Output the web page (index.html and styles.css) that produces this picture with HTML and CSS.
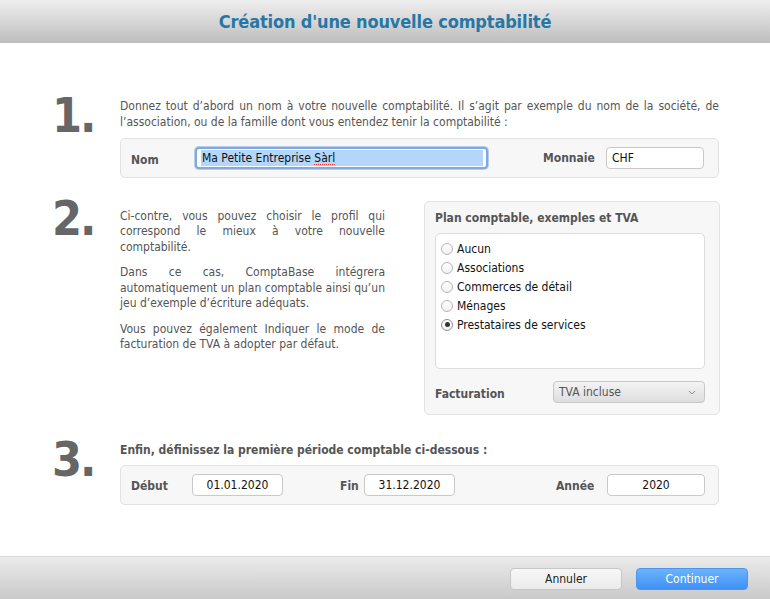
FILE: index.html
```html
<!DOCTYPE html>
<html lang="fr">
<head>
<meta charset="utf-8">
<title>Création d'une nouvelle comptabilité</title>
<link rel="stylesheet" href="styles.css">
</head>
<body>
<div class="window">
  <header class="titlebar">
    <h1 class="title">Création d'une nouvelle comptabilité</h1>
  </header>
  <main class="content">
    <section class="step step1">
      <div class="digit">1.</div>
      <div class="body">
        <p class="intro">Donnez tout d’abord un nom à votre nouvelle comptabilité. Il s’agit par exemple du nom de la société, de l’association, ou de la famille dont vous entendez tenir la comptabilité :</p>
        <div class="box row1">
          <span class="label lbl-nom">Nom</span>
          <div class="field field-nom focused"><span class="sel">Ma Petite Entreprise <span class="spell">Sàrl</span></span></div>
          <span class="label lbl-monnaie">Monnaie</span>
          <div class="field field-monnaie">CHF</div>
        </div>
      </div>
    </section>

    <section class="step step2">
      <div class="digit">2.</div>
      <div class="body split">
        <div class="explain">
          <p>Ci-contre, vous pouvez choisir le profil qui correspond le mieux à votre nouvelle comptabilité.</p>
          <p>Dans ce cas, ComptaBase intégrera automatiquement un plan comptable ainsi qu’un jeu d’exemple d’écriture adéquats.</p>
          <p>Vous pouvez également Indiquer le mode de facturation de TVA à adopter par défaut.</p>
        </div>
        <div class="panel">
          <div class="panel-title">Plan comptable, exemples et TVA</div>
          <ul class="radios">
            <li><span class="radio"></span>Aucun</li>
            <li><span class="radio"></span>Associations</li>
            <li><span class="radio"></span>Commerces de détail</li>
            <li><span class="radio"></span>Ménages</li>
            <li><span class="radio checked"></span>Prestataires de services</li>
          </ul>
          <div class="facturation">
            <span class="label">Facturation</span>
            <div class="select">TVA incluse
              <svg class="chev" width="8" height="5" viewBox="0 0 8 5"><path d="M1 1 L4 4 L7 1" fill="none" stroke="#8a8a8a" stroke-width="1"/></svg>
            </div>
          </div>
        </div>
      </div>
    </section>

    <section class="step step3">
      <div class="digit">3.</div>
      <div class="body">
        <p class="lead">Enfin, définissez la première période comptable ci-dessous :</p>
        <div class="box row3">
          <span class="label lbl-debut">Début</span>
          <div class="field center f-debut">01.01.2020</div>
          <span class="label lbl-fin">Fin</span>
          <div class="field center f-fin">31.12.2020</div>
          <span class="label lbl-annee">Année</span>
          <div class="field center f-annee">2020</div>
        </div>
      </div>
    </section>
  </main>
  <footer class="footer">
    <button class="btn btn-cancel">Annuler</button>
    <button class="btn btn-primary">Continuer</button>
  </footer>
</div>
</body>
</html>
```

FILE: styles.css
```css
* { box-sizing: border-box; }
html, body { margin: 0; padding: 0; background: #fff; }
body {
  font-family: "DejaVu Sans Condensed", "DejaVu Sans", sans-serif;
  font-size: 12px;
  color: #555;
}
.window {
  width: 770px;
  height: 599px;
  display: flex;
  flex-direction: column;
  overflow: hidden;
}
.titlebar {
  height: 43px;
  flex: none;
  background: linear-gradient(#efefef, #bdbdbd);
  display: flex;
  align-items: center;
  justify-content: center;
}
.title {
  margin: 0;
  font-family: "DejaVu Sans Condensed", sans-serif;
  font-weight: bold;
  font-size: 18px;
  color: #2677a6;
  letter-spacing: -0.15px;
}
.content {
  flex: 1;
  padding-top: 55px;
}
.step {
  display: grid;
  grid-template-columns: 68px 599px;
  padding-left: 52px;
}
.digit {
  font-family: "DejaVu Sans Condensed", sans-serif;
  font-weight: bold;
  font-size: 48px;
  line-height: 48px;
  color: #666;
  letter-spacing: -2px;
  margin-top: -7px;
}
p { margin: 0; }
.intro {
  line-height: 16px;
  text-align: justify;
}
.box {
  background: #f7f7f7;
  border: 1px solid #e2e2e2;
  border-radius: 5px;
  height: 40px;
  display: flex;
  align-items: center;
  padding-left: 10px;
}
.label {
  font-weight: bold;
  color: #555;
}
.row1 { margin-top: 8px; }
.lbl-nom { margin-top: 3px; width: 64px; }
.field {
  height: 22px;
  background: #fff;
  border: 1px solid #c9c9c9;
  border-radius: 4px;
  display: flex;
  align-items: center;
  padding-left: 5px;
  color: #111;
}
.field.center { justify-content: center; padding-left: 0; }
.field-nom {
  width: 293px;
  border: 2px solid #80a9e0;
  box-shadow: 0 0 0 1px #b7cdee;
  padding-left: 4px;
}
.sel {
  background: #b4d6fb;
  display: block;
  width: 282px;
  height: 16px;
  line-height: 16px;
  padding-left: 1px;
}
.spell {
  text-decoration: underline dotted #e33;
  text-decoration-thickness: 1px;
  text-underline-offset: 2px;
}
.lbl-monnaie { margin-left: 55px; width: 63px; }
.field-monnaie { width: 98px; height: 22px; }

.step2 { margin-top: 23px; }
.split {
  display: flex;
  justify-content: space-between;
}
.explain {
  width: 265px;
  padding-top: 8px;
  line-height: 15.3px;
  text-align: justify;
}
.explain p + p { margin-top: 10.5px; }
.panel {
  width: 296px;
  margin-right: -1px;
  height: 214px;
  background: #f7f7f7;
  border: 1px solid #e2e2e2;
  border-radius: 5px;
  padding: 8px 14px 0 10px;
}
.panel-title {
  font-weight: bold;
  color: #555;
  line-height: 16px;
}
.radios {
  list-style: none;
  margin: 7px 0 0 0;
  padding: 5px 0 0 5px;
  background: #fff;
  border: 1px solid #dcdcdc;
  border-radius: 5px;
  height: 136px;
}
.radios li {
  display: flex;
  align-items: center;
  height: 19px;
  color: #111;
}
.radio {
  width: 12px;
  height: 12px;
  border-radius: 50%;
  border: 1px solid #b5b5b5;
  background: linear-gradient(#fff, #f1f1f1);
  margin-right: 4px;
  position: relative;
}
.radio.checked {
  border-color: #8f8f8f;
}
.radio.checked::after {
  content: "";
  position: absolute;
  left: 2.5px;
  top: 2.5px;
  width: 5px;
  height: 5px;
  border-radius: 50%;
  background: #333;
}
.facturation {
  display: flex;
  align-items: center;
  justify-content: space-between;
  margin-top: 12px;
}
.facturation .label { margin-top: 4px; }
.select {
  width: 152px;
  height: 22px;
  border: 1px solid #c8c8c8;
  border-radius: 4px;
  background: linear-gradient(#f3f3f3, #dedede);
  display: flex;
  align-items: center;
  justify-content: space-between;
  padding: 0 8px 0 5px;
  color: #555;
}

.step3 { margin-top: 27px; }
.lead {
  font-weight: bold;
  color: #555;
  line-height: 16px;
}
.row3 { margin-top: 7px; }
.lbl-debut { width: 61px; margin-top: 2px; }
.f-debut { width: 91px; }
.lbl-fin { margin-left: 57px; width: 24px; margin-top: 2px; }
.f-fin { width: 91px; }
.lbl-annee { margin-left: 101px; width: 51px; margin-top: 2px; }
.f-annee { width: 98px; }

.footer {
  height: 43px;
  flex: none;
  border-top: 1px solid #d9d9d9;
  background: linear-gradient(#ebebeb, #c9c9c9);
  display: flex;
  align-items: center;
  justify-content: flex-end;
  padding-right: 22px;
  gap: 14px;
}
.btn {
  width: 112px;
  height: 22px;
  border-radius: 4px;
  font-family: "DejaVu Sans Condensed", sans-serif;
  font-size: 12px;
  margin-top: 1px;
}
.btn-cancel {
  background: linear-gradient(#f7f7f7, #ebebeb);
  border: 1px solid #c6c6c6;
  color: #222;
}
.btn-primary {
  background: linear-gradient(#6cb4fb, #3e90f6);
  border: 1px solid #4c95ee;
  color: #fff;
}
```
